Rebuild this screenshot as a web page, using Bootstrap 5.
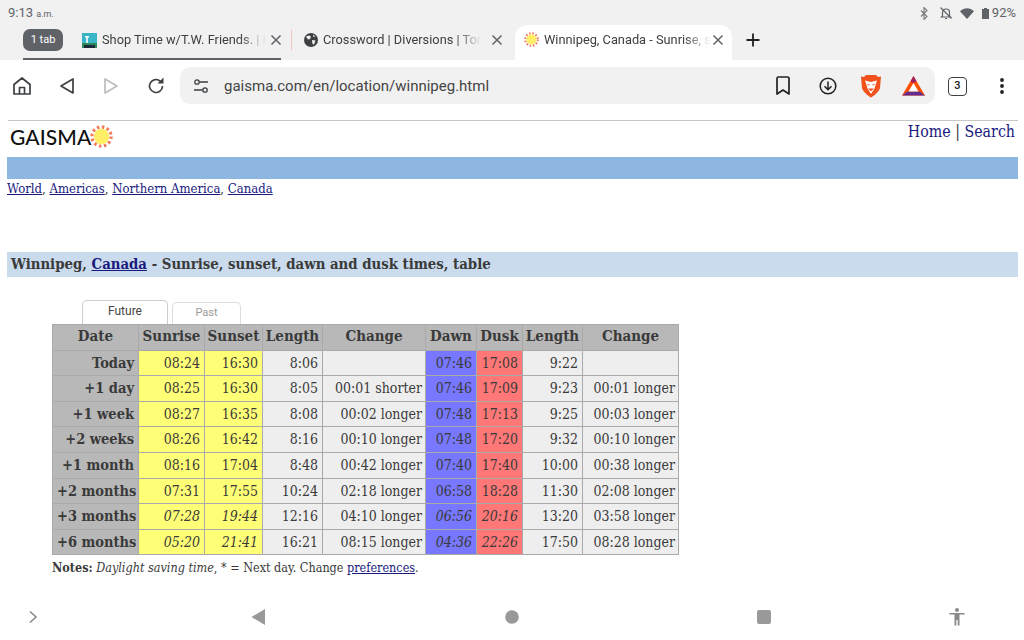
<!DOCTYPE html>
<html lang="en">
<head>
  <meta charset="UTF-8">
  <meta name="viewport" content="width=device-width, initial-scale=1">
  <title>Winnipeg, Canada - Sunrise, sunset, dawn and dusk times, table</title>
  <link href="https://cdn.jsdelivr.net/npm/bootstrap@5.3.2/dist/css/bootstrap.min.css" rel="stylesheet">
  <style>
    html, body { height: 640px; overflow: hidden; }
    body { font-family: Roboto, sans-serif; background: #fff; color: #3c4043; }
    svg { display: block; flex: none; }

    .status-row { height: 26px; background: #f1f1f1; padding: 0 8px; font-size: 13px; color: #5f6368; }
    .status-row small { font-size: 9px; }
    .status-pct { font-size: 13px; margin-left: 3px; }
    .bell-gap { margin: 0 -1px 0 1px; }

    .tab-strip { height: 34px; background: #f1f1f1; padding-left: 23px; position: relative; }
    .tab-count { width: 40px; height: 22px; margin-top: 3px; background: #5f6368; color: #fff; font-size: 11px; border-radius: 7px; }
    .tab-line { position: absolute; left: 23px; top: 32px; width: 258px; height: 2px; background: #5f6368; }
    .tab-item { height: 28px; font-size: 12.8px; color: #3c4043; white-space: nowrap; }
    .tab-title { margin-left: 5px; -webkit-mask-image: linear-gradient(90deg, #000 84%, transparent 100%); mask-image: linear-gradient(90deg, #000 84%, transparent 100%); }
    .tab-one { width: 200px; margin-left: 19px; }
    .tab-sep { width: 1px; height: 20px; margin: 4px 12px 0 9px; background: #f0c4c4; }
    .tab-two { width: 199px; }
    .tab-active { width: 217px; height: 35px; margin: -1px 0 0 12px; padding: 0 0 6px 9px; background: #fff; border-radius: 12px 12px 0 0; }
    .tab-plus { margin: 0 0 0 14px; }

    .tool-row { height: 52px; background: #fff; padding-top: 7px; }
    .tool-cell { width: 44.5px; height: 38px; }
    .url-box { width: 755px; height: 37px; margin: 0 0 0 2px; background: #f1f1f1; border-radius: 10px; font-size: 15px; color: #444; padding-left: 13px; }
    .url-text { margin: 2px auto 0 15px; }
    .gap-mark { margin-right: 28px; }
    .gap-down { margin-right: 23px; }
    .gap-brave { margin-right: 20px; }
    .gap-bat { margin-right: 10px; }
    .tab-num { width: 19px; height: 19px; margin: 10px 0 0 13px; border: 1.6px solid #3c4043; border-radius: 4px; font-size: 11px; font-weight: 500; color: #222; }
    .more-cell { height: 38px; margin-left: 33px; }

    .page-wrap { padding: 1px 6px 0 7px; font-family: "DejaVu Serif Condensed", "DejaVu Serif", serif; font-size: 13px; color: #3a3a3a; height: 485px; }
    .page-wrap a { color: #1a1a7e; }
    .page-rule { height: 1px; margin: 7px 0 0 1px; background: #c8c8c8; }
    .head-row { height: 36px; padding: 3px 3px 0 3px; }
    .logo-text { font-family: Lato, sans-serif; font-size: 21px; font-weight: 500; color: #111; line-height: 25px; letter-spacing: .1px; }
    .logo-sun { margin: 1px 0 0 -1px; }
    .top-links { font-size: 15.8px; line-height: 16px; }
    .top-links a { text-decoration: none; }
    .blue-band { height: 22px; background: #8db6e0; }
    .crumbs { line-height: 19px; height: 73px; }
    .title-band { height: 25px; line-height: 23px; padding-left: 4px; background: #c9dbec; font-size: 14.8px; font-weight: 700; }
    .table-wrap { margin: 23px 0 0 45px; }
    .tab-btns { padding-left: 30px; height: 24px; font-family: Roboto, sans-serif; font-size: 12px; }
    .tab-btn { width: 86px; height: 24px; padding-bottom: 3px; background: #fff; border: 1px solid #ccc; border-bottom: 0; border-radius: 5px 5px 0 0; color: #444; }
    .tab-btn-off { width: 69px; height: 22px; margin: 2px 0 0 4px; padding-bottom: 1px; color: #999; border-color: #ddd; font-size: 11px; }

    .sun-table.table { width: 626px; table-layout: fixed; margin: 0; border-color: #aaa; color: #3a3a3a; font-size: 14px; --bs-table-bg: #eee; }
    .sun-table.table > :not(caption) > * > * { padding: 0 4px; height: 25.6px; line-height: 24px; text-align: right; white-space: nowrap; color: #3a3a3a; border-width: 1px; border-color: #aaa; }
    .sun-table.table > thead > * > *, .sun-table.table > tbody > * > th { --bs-table-bg: #b8b8b8; background-color: #b8b8b8; font-weight: 700; }
    .sun-table.table > thead > * > * { text-align: center; vertical-align: top; padding: 0; line-height: 22px; font-size: 15px; }
    .sun-table.table > tbody > * > th { font-size: 14.5px; }
    .sun-table.table > tbody > * > .cell-sun { --bs-table-bg: #ffff77; background-color: #ffff77; }
    .sun-table.table > tbody > * > .cell-dawn { --bs-table-bg: #7777ff; background-color: #7777ff; }
    .sun-table.table > tbody > * > .cell-dusk { --bs-table-bg: #ff7777; background-color: #ff7777; }
    .sun-table.table > tbody > * > .cell-change { padding-right: 3px; }
    .notes { margin: 4px 0 0; font-size: 12.5px; line-height: 18px; }

    .nav-row { height: 40px; }
    .nav-a { margin-left: 27px; }
    .nav-b { margin-left: 212px; }
    .nav-c { margin-left: 239px; }
    .nav-d { margin-left: 238px; }
    .nav-e { margin-left: 178px; }
  </style>
</head>
<body>
  <svg width="0" height="0" class="position-absolute">
    <symbol id="sun" viewBox="0 0 24 24">
      <circle cx="12" cy="12" r="10" fill="none" stroke="#f47c5c" stroke-width="3.400" stroke-dasharray="2.620 2.620"/>
      <circle cx="12" cy="12" r="8" fill="#ffee66"/>
    </symbol>
    <symbol id="close" viewBox="0 0 12 12">
      <path d="M1.500 1.500l9 9M10.500 1.500l-9 9" fill="none" stroke="#5f6368" stroke-width="1.500"/>
    </symbol>
  </svg>

  <div class="status-row d-flex align-items-center justify-content-between">
    <div>9:13 <small>a.m.</small></div>
    <div class="d-flex align-items-center gap-2">
      <svg width="12" height="13" viewBox="0 0 12 13"><path d="M3 3.500l6 6-3 3V.5l3 3-6 6" fill="none" stroke="#777" stroke-width="1.100"/></svg>
      <svg class="bell-gap" width="14" height="14" viewBox="0 0 14 14"><path d="M3.500 10V6.500a3.500 3.500 0 0 1 7 0V10l1 1h-9zM6 12.500h2M1.500 1.500l11 11" fill="none" stroke="#5f6368" stroke-width="1.200"/></svg>
      <svg width="14" height="11" viewBox="0 0 14 11"><path d="M0 3.200C4 -.8 10 -.8 14 3.200L7 11z" fill="#5f6368"/></svg>
      <div class="d-flex align-items-center">
        <svg width="7" height="11" viewBox="0 0 7 11"><path d="M2 0h3v1h2v10H0V1h2z" fill="#5f6368"/></svg>
        <span class="status-pct">92%</span>
      </div>
    </div>
  </div>

  <div class="tab-strip d-flex">
    <div class="tab-count d-flex align-items-center justify-content-center">1 tab</div>
    <div class="tab-line"></div>
    <div class="tab-item tab-one d-flex align-items-center">
      <svg width="15" height="15" viewBox="0 0 15 15"><rect width="15" height="15" fill="#38b6c8"/><rect y="10" width="15" height="5" fill="#2e8a5a"/><rect y="12" x="2" width="11" height="3" fill="#1c2a3a"/><path d="M3 3h4v1.500H5.800V10H4.200V4.500H3z" fill="#fff"/></svg>
      <span class="tab-title">Shop Time w/T.W. Friends. | I</span>
      <svg class="ms-auto" width="12" height="12"><use href="#close"/></svg>
    </div>
    <div class="tab-sep"></div>
    <div class="tab-item tab-two d-flex align-items-center">
      <svg width="14" height="14" viewBox="0 0 14 14"><circle cx="7" cy="7" r="7" fill="#3c4043"/><path d="M2 3.500l3-1 2 1-1 2.500-2 .5zM8 7l3.500 .5-1.500 4-1.500-.5zM9 1.500l2.500 2-2 .5z" fill="#f1f1f1"/></svg>
      <span class="tab-title">Crossword | Diversions | Tor</span>
      <svg class="ms-auto" width="12" height="12"><use href="#close"/></svg>
    </div>
    <div class="tab-item tab-active d-flex align-items-center">
      <svg width="15" height="15"><use href="#sun"/></svg>
      <span class="tab-title">Winnipeg, Canada - Sunrise, s</span>
      <svg class="ms-auto me-2" width="12" height="12"><use href="#close"/></svg>
    </div>
    <div class="tab-item tab-plus d-flex align-items-center">
      <svg width="14" height="14" viewBox="0 0 14 14"><path d="M7 .5v13M.5 7h13" stroke="#222" stroke-width="1.800"/></svg>
    </div>
  </div>

  <div class="tool-row d-flex align-items-start">
    <div class="tool-cell d-flex justify-content-center align-items-center">
      <svg width="20" height="20" viewBox="0 0 20 20"><path d="M2 8.500L10 2l8 6.500V18H2zM7.500 18v-6.500h5V18" fill="none" stroke="#3c4043" stroke-width="1.700" stroke-linejoin="round"/></svg>
    </div>
    <div class="tool-cell d-flex justify-content-center align-items-center">
      <svg width="16" height="18" viewBox="0 0 16 18"><path d="M14 2v14L2 9z" fill="none" stroke="#3c4043" stroke-width="1.700" stroke-linejoin="round"/></svg>
    </div>
    <div class="tool-cell d-flex justify-content-center align-items-center">
      <svg width="16" height="18" viewBox="0 0 16 18"><path d="M2 2v14l12-7z" fill="none" stroke="#bdbdbd" stroke-width="1.700" stroke-linejoin="round"/></svg>
    </div>
    <div class="tool-cell d-flex justify-content-center align-items-center">
      <svg width="18" height="18" viewBox="0 0 18 18"><path d="M15.500 9a6.500 6.500 0 1 1-2-4.700" fill="none" stroke="#3c4043" stroke-width="1.700"/><path d="M16.500 1v6h-6z" fill="#3c4043" transform="translate(0 -.5)"/></svg>
    </div>
    <div class="url-box d-flex align-items-center">
      <svg width="16" height="14" viewBox="0 0 16 14"><circle cx="4" cy="3" r="2.200" fill="none" stroke="#3c4043" stroke-width="1.300"/><circle cx="12" cy="11" r="2.200" fill="none" stroke="#3c4043" stroke-width="1.300"/><path d="M6.500 3H15M1 11h8.500" stroke="#3c4043" stroke-width="1.300"/></svg>
      <span class="url-text">gaisma.com/en/location/winnipeg.html</span>
      <svg class="gap-mark" width="16" height="19" viewBox="0 0 16 19"><path d="M2 2.500a1.500 1.500 0 0 1 1.500-1.500h9A1.500 1.500 0 0 1 14 2.500V18l-6-4-6 4z" fill="none" stroke="#222" stroke-width="1.700" stroke-linejoin="round"/></svg>
      <svg class="gap-down" width="18" height="18" viewBox="0 0 18 18"><circle cx="9" cy="9" r="7.800" fill="none" stroke="#222" stroke-width="1.500"/><path d="M9 4.500v8M5.500 9.300L9 12.800l3.500-3.500" fill="none" stroke="#222" stroke-width="1.500"/></svg>
      <svg class="gap-brave" width="22" height="24" viewBox="0 0 22 24"><path d="M6 1h10l2 2 3-.5L20 14c-.5 3-6 8-9 9.500C8 22 2.500 17 2 14L1 2.500 4 3z" fill="#f1511b"/><path d="M5 6.500l4 1 2 .5 2-.5 4-1-1.500 4.500-1 3.500L11 20l-3.500-5.500-1-3.500z" fill="#fff"/><path d="M7.500 10.500l2 .5M14.500 10.500l-2 .5M9.500 15h3L11 16.500z" stroke="#f1511b" stroke-width="1.200" fill="#f1511b"/></svg>
      <svg class="gap-bat" width="23" height="20" viewBox="0 0 23 20"><path d="M11.500 0L23 19.500H0z" fill="#ff5000"/><path d="M0 19.500h23l-5.300-4H5.300z" fill="#662d91"/><path d="M11.500 0l-3 5.500 3 1.500 3-1.500z" fill="#9e1f63"/><path d="M11.500 7l5 8.500h-10z" fill="#fff"/></svg>
    </div>
    <div class="tab-num d-flex align-items-center justify-content-center">3</div>
    <div class="more-cell d-flex align-items-center">
      <svg width="4" height="16" viewBox="0 0 4 16"><circle cx="2" cy="2" r="1.900" fill="#222"/><circle cx="2" cy="8" r="1.900" fill="#222"/><circle cx="2" cy="14" r="1.900" fill="#222"/></svg>
    </div>
  </div>

  <div class="page-wrap">
    <div class="page-rule"></div>
    <div class="head-row d-flex justify-content-between">
      <div class="d-flex align-items-start">
        <span class="logo-text">GAISMA</span>
        <svg class="logo-sun" width="23" height="23"><use href="#sun"/></svg>
      </div>
      <div class="top-links"><a href="#">Home</a> | <a href="#">Search</a></div>
    </div>
    <div class="blue-band"></div>
    <div class="crumbs"><a href="#">World</a>, <a href="#">Americas</a>, <a href="#">Northern America</a>, <a href="#">Canada</a></div>
    <div class="title-band">Winnipeg, <a href="#">Canada</a> - Sunrise, sunset, dawn and dusk times, table</div>
    <div class="table-wrap">
      <div class="tab-btns d-flex">
        <div class="tab-btn d-flex align-items-center justify-content-center">Future</div>
        <div class="tab-btn tab-btn-off d-flex align-items-center justify-content-center">Past</div>
      </div>
      <table class="table table-bordered sun-table">
        <colgroup>
          <col style="width:86px"><col style="width:66px"><col style="width:58px"><col style="width:60px"><col style="width:103px"><col style="width:51px"><col style="width:46px"><col style="width:60px"><col style="width:96px">
        </colgroup>
        <thead>
          <tr><th>Date</th><th>Sunrise</th><th>Sunset</th><th>Length</th><th>Change</th><th>Dawn</th><th>Dusk</th><th>Length</th><th>Change</th></tr>
        </thead>
        <tbody>
          <tr><th>Today</th><td class="cell-sun">08:24</td><td class="cell-sun">16:30</td><td>8:06</td><td class="cell-change"></td><td class="cell-dawn">07:46</td><td class="cell-dusk">17:08</td><td>9:22</td><td class="cell-change"></td></tr>
          <tr><th>+1 day</th><td class="cell-sun">08:25</td><td class="cell-sun">16:30</td><td>8:05</td><td class="cell-change">00:01 shorter</td><td class="cell-dawn">07:46</td><td class="cell-dusk">17:09</td><td>9:23</td><td class="cell-change">00:01 longer</td></tr>
          <tr><th>+1 week</th><td class="cell-sun">08:27</td><td class="cell-sun">16:35</td><td>8:08</td><td class="cell-change">00:02 longer</td><td class="cell-dawn">07:48</td><td class="cell-dusk">17:13</td><td>9:25</td><td class="cell-change">00:03 longer</td></tr>
          <tr><th>+2 weeks</th><td class="cell-sun">08:26</td><td class="cell-sun">16:42</td><td>8:16</td><td class="cell-change">00:10 longer</td><td class="cell-dawn">07:48</td><td class="cell-dusk">17:20</td><td>9:32</td><td class="cell-change">00:10 longer</td></tr>
          <tr><th>+1 month</th><td class="cell-sun">08:16</td><td class="cell-sun">17:04</td><td>8:48</td><td class="cell-change">00:42 longer</td><td class="cell-dawn">07:40</td><td class="cell-dusk">17:40</td><td>10:00</td><td class="cell-change">00:38 longer</td></tr>
          <tr><th>+2 months</th><td class="cell-sun">07:31</td><td class="cell-sun">17:55</td><td>10:24</td><td class="cell-change">02:18 longer</td><td class="cell-dawn">06:58</td><td class="cell-dusk">18:28</td><td>11:30</td><td class="cell-change">02:08 longer</td></tr>
          <tr><th>+3 months</th><td class="cell-sun fst-italic">07:28</td><td class="cell-sun fst-italic">19:44</td><td>12:16</td><td class="cell-change">04:10 longer</td><td class="cell-dawn fst-italic">06:56</td><td class="cell-dusk fst-italic">20:16</td><td>13:20</td><td class="cell-change">03:58 longer</td></tr>
          <tr><th>+6 months</th><td class="cell-sun fst-italic">05:20</td><td class="cell-sun fst-italic">21:41</td><td>16:21</td><td class="cell-change">08:15 longer</td><td class="cell-dawn fst-italic">04:36</td><td class="cell-dusk fst-italic">22:26</td><td>17:50</td><td class="cell-change">08:28 longer</td></tr>
        </tbody>
      </table>
      <p class="notes"><b>Notes:</b> <i>Daylight saving time</i>, * = Next day. Change <a href="#">preferences</a>.</p>
    </div>
  </div>

  <div class="nav-row d-flex align-items-center">
    <svg class="nav-a" width="12" height="14" viewBox="0 0 12 14"><path d="M3 1.500L9 7l-6 5.500" fill="none" stroke="#8a8a8a" stroke-width="1.600"/></svg>
    <svg class="nav-b" width="15" height="16" viewBox="0 0 15 16"><path d="M14 0v16L.5 8z" fill="#999"/></svg>
    <svg class="nav-c" width="14" height="14" viewBox="0 0 14 14"><circle cx="7" cy="7" r="6.800" fill="#999"/></svg>
    <svg class="nav-d" width="14" height="14" viewBox="0 0 14 14"><rect width="14" height="14" rx="2" fill="#999"/></svg>
    <svg class="nav-e" width="16" height="18" viewBox="0 0 16 18"><circle cx="8" cy="2" r="2" fill="#888"/><path d="M.5 5h15v1.600H10.500V17.500H8.700V12H7.300v5.500H5.500V6.600H.5z" fill="#888"/></svg>
  </div>
</body>
</html>
